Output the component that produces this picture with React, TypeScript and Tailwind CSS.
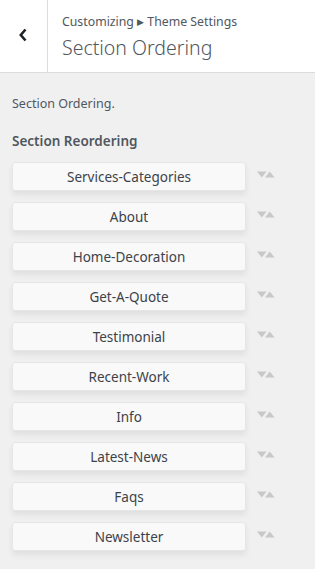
import React from "react";

const items = [
  "Services-Categories",
  "About",
  "Home-Decoration",
  "Get-A-Quote",
  "Testimonial",
  "Recent-Work",
  "Info",
  "Latest-News",
  "Faqs",
  "Newsletter",
];

export default function App() {
  return (
    <div
      className="w-[315px] h-[569px] bg-[#f0f0f1] text-[#50575e] overflow-hidden"
      style={{ fontFamily: '"Noto Sans", sans-serif' }}
    >
      <div className="flex h-[73px] bg-white border-b border-[#dcdcde]">
        <div className="w-[48px] border-r border-[#dcdcde] flex items-center justify-center">
          <svg width="10" height="14" viewBox="0 0 10 14" className="ml-[-2px] mt-[-2px]">
            <path d="M7.5 1.5 L2.8 7 L7.5 12.5" fill="none" stroke="#1d2327" strokeWidth="2.6" />
          </svg>
        </div>
        <div className="flex flex-col pl-[14px] pt-[13px]">
          <div className="text-[12.3px] leading-[18px] text-[#50575e]">
            Customizing <span className="text-[9px] align-[1px]">▶</span> Theme Settings
          </div>
          <div className="text-[19.5px] leading-[28px] mt-[3px] text-[#50575e] font-light">
            Section Ordering
          </div>
        </div>
      </div>
      <div className="px-[12px] pt-[22px]">
        <div className="text-[12.5px] leading-[18px] text-[#50575e]">Section Ordering.</div>
        <div className="text-[13.5px] leading-[20px] font-semibold text-[#50575e] mt-[18px]">
          Section Reordering
        </div>
        <div className="flex flex-col gap-[11px] mt-[11px]">
          {items.map((it) => (
            <div key={it} className="flex items-center">
              <div className="w-[234px] h-[29px] pt-[1px] bg-[#f9f9f9] border border-[#e6e6e6] rounded-[3px] shadow-[0_4px_6px_rgba(0,0,0,0.07)] flex items-center justify-center text-[13.5px] text-[#3c434a]">
                {it}
              </div>
              <svg width="18" height="7" viewBox="0 0 18 7" className="ml-[11px] mt-[-4px]">
                <path d="M0 0.5 H9.5 L4.75 6.5 Z" fill="#c8c8c8" />
                <path d="M8 6.5 H17.5 L12.75 0.5 Z" fill="#c8c8c8" />
              </svg>
            </div>
          ))}
        </div>
      </div>
    </div>
  );
}
